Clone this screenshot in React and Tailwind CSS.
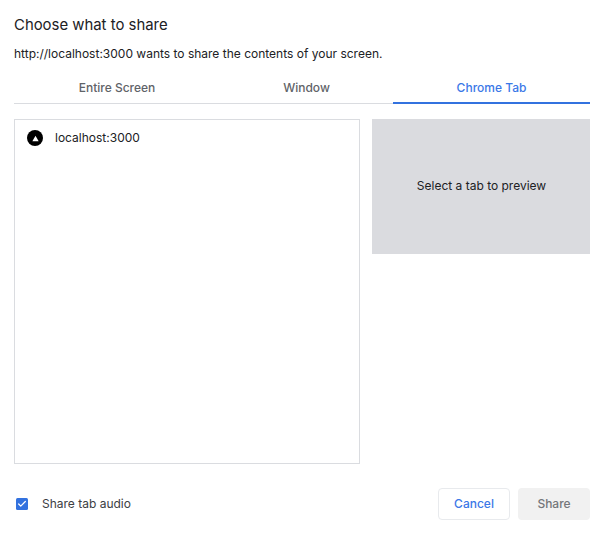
import React from 'react';
import { Check } from 'lucide-react';

const TABS = ['Entire Screen', 'Window', 'Chrome Tab'];

const App = () => {
    return (
        <div className="w-[604px] h-[534px] bg-white flex flex-col px-[14px] font-['Inter',sans-serif] text-[#202124]">
            <h1 className="mt-[16px] h-[18px] leading-[18px] text-[14.9px] font-normal">Choose what to share</h1>
            <p className="mt-[12px] h-[16px] leading-[16px] text-[12px]">http://localhost:3000 wants to share the contents of your screen.</p>

            <div className="mt-[10px] h-[32px] grid grid-cols-[206px_173px_197px] border-b border-[#dadce0]">
                {TABS.map((tab, i) => (
                    <div
                        key={tab}
                        className={i === 2
                            ? 'h-[32px] pt-[1px] flex items-center justify-center text-[12px] font-medium text-[#3b78e7] border-b-2 border-[#3372df]'
                            : 'h-[31px] flex items-center justify-center text-[12px] font-medium text-[#5f6368]'}
                    >
                        {tab}
                    </div>
                ))}
            </div>

            <div className="mt-[15px] flex gap-[12px]">
                <div className="w-[346px] h-[345px] border border-[#dadce0] pl-[12px] pt-[10px]">
                    <div className="flex items-center gap-[12px] h-[16px]">
                        <span className="w-[16px] h-[16px] rounded-full bg-black flex items-center justify-center">
                            <svg width="7" height="7" viewBox="0 0 8 8">
                                <path d="M4 0.8 L7.6 7 H0.4 Z" fill="#fff" />
                            </svg>
                        </span>
                        <span className="text-[12px] leading-[16px]">localhost:3000</span>
                    </div>
                </div>
                <div className="w-[218px] h-[135px] pb-[2px] pl-[1px] bg-[#dadbdf] flex items-center justify-center text-[12px]">
                    Select a tab to preview
                </div>
            </div>

            <div className="mt-[24px] flex items-center justify-between">
                <label className="flex items-center gap-[14px] pl-[2px]">
                    <span className="w-[12px] h-[12px] rounded-[1.5px] bg-[#3372df] flex items-center justify-center">
                        <Check className="w-[10px] h-[10px] text-white" strokeWidth={3} />
                    </span>
                    <span className="text-[12px] text-[#3c4043]">Share tab audio</span>
                </label>
                <div className="flex gap-[8px]">
                    <button className="w-[72px] h-[32px] rounded-[4px] border border-[#e8eaed] bg-white text-[12px] font-medium text-[#3b78e7]">Cancel</button>
                    <button className="w-[72px] h-[32px] rounded-[4px] bg-[#f1f1f1] text-[12px] font-medium text-[#74767a]">Share</button>
                </div>
            </div>
        </div>
    );
};

export default App;
